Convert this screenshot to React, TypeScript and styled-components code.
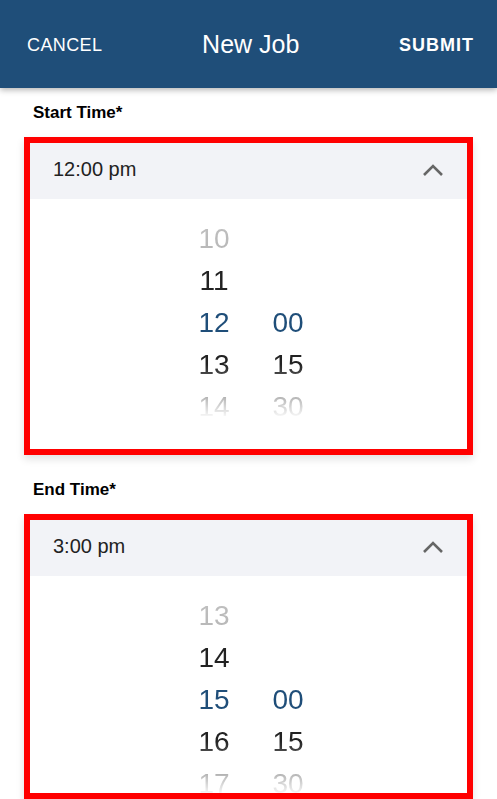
import styled, { createGlobalStyle } from "styled-components";

const GlobalStyle = createGlobalStyle`
  html, body {
    margin: 0;
    padding: 0;
    background: #ffffff;
    font-family: "Liberation Sans", Arial, sans-serif;
  }
`;

const BRAND = "#1f4e79";

const Page = styled.div`
  display: flex;
  flex-direction: column;
  height: 100vh;
  overflow: hidden;
`;

const TopBar = styled.header`
  flex-shrink: 0;
  display: flex;
  align-items: center;
  justify-content: space-between;
  height: 88px;
  padding: 0 23px 0 27px;
  background: ${BRAND};
  color: #ffffff;
  box-shadow: 0 2px 6px rgba(0, 0, 0, 0.3);
  position: relative;
  z-index: 1;
`;

const BarButton = styled.span<{ strong?: boolean }>`
  font-size: 18px;
  font-weight: ${({ strong }) => (strong ? 700 : 400)};
  letter-spacing: ${({ strong }) => (strong ? "1px" : "0.4px")};
  text-transform: uppercase;
  padding-top: 2px;
`;

const Title = styled.h1`
  margin: 0;
  font-size: 25px;
  font-weight: 400;
`;

const Section = styled.section<{ grow?: boolean }>`
  display: flex;
  flex-direction: column;
  padding: 0 24px;
  margin-top: ${({ grow }) => (grow ? "25px" : "15px")};
  flex: ${({ grow }) => (grow ? "1 1 auto" : "0 0 auto")};
  min-height: 0;
`;

const Label = styled.label`
  display: block;
  padding-left: 9px;
  margin-bottom: 14px;
  font-size: 17px;
  line-height: 20px;
  font-weight: 700;
  color: #000000;
`;

const PickerBox = styled.div<{ grow?: boolean }>`
  border: 6px solid #ff0000;
  background: #ffffff;
  box-shadow: 0 4px 8px rgba(0, 0, 0, 0.12);
  overflow: hidden;
  flex: ${({ grow }) => (grow ? "1 1 auto" : "0 0 auto")};
  min-height: 0;
`;

const PickerHead = styled.div`
  display: flex;
  align-items: center;
  justify-content: space-between;
  height: 56px;
  box-sizing: border-box;
  padding: 0 23px 3px 23px;
  background: #f2f3f7;
  font-size: 20px;
  color: #222222;
`;

const Wheel = styled.div`
  display: flex;
  justify-content: center;
  gap: 42px;
  height: 250px;
  padding: 19px 0 0 5px;
  box-sizing: border-box;
  -webkit-mask-image: linear-gradient(
    to bottom,
    rgba(0, 0, 0, 0.25) 0%,
    rgba(0, 0, 0, 0.32) 20%,
    #000 28%,
    #000 66%,
    rgba(0, 0, 0, 0.75) 72%,
    rgba(0, 0, 0, 0.3) 80%,
    transparent 88%
  );
  mask-image: linear-gradient(
    to bottom,
    rgba(0, 0, 0, 0.25) 0%,
    rgba(0, 0, 0, 0.32) 20%,
    #000 28%,
    #000 66%,
    rgba(0, 0, 0, 0.75) 72%,
    rgba(0, 0, 0, 0.3) 80%,
    transparent 88%
  );
`;

const Column = styled.div`
  display: flex;
  flex-direction: column;
  width: 32px;
`;

const Cell = styled.div<{ active?: boolean }>`
  height: 42px;
  line-height: 42px;
  font-size: 28px;
  text-align: center;
  color: ${({ active }) => (active ? BRAND : "#222222")};
`;

function Chevron() {
  return (
    <svg width="22" height="14" viewBox="0 0 22 14" aria-hidden="true">
      <polyline
        points="2,12 11,3 20,12"
        fill="none"
        stroke="#666666"
        strokeWidth="2.6"
      />
    </svg>
  );
}

type PickerProps = {
  label: string;
  value: string;
  hour: number;
  grow?: boolean;
};

function TimePicker({ label, value, hour, grow }: PickerProps) {
  const hours = [hour - 2, hour - 1, hour, hour + 1, hour + 2];
  const minutes = ["", "", "00", "15", "30"];
  return (
    <Section grow={grow}>
      <Label>{label}</Label>
      <PickerBox grow={grow}>
        <PickerHead>
          <span>{value}</span>
          <Chevron />
        </PickerHead>
        <Wheel>
          <Column>
            {hours.map((h) => (
              <Cell key={h} active={h === hour}>
                {h}
              </Cell>
            ))}
          </Column>
          <Column>
            {minutes.map((m, i) => (
              <Cell key={i} active={m === "00"}>
                {m}
              </Cell>
            ))}
          </Column>
        </Wheel>
      </PickerBox>
    </Section>
  );
}

export default function App() {
  return (
    <Page>
      <GlobalStyle />
      <TopBar>
        <BarButton>Cancel</BarButton>
        <Title>New Job</Title>
        <BarButton strong>Submit</BarButton>
      </TopBar>
      <TimePicker label="Start Time*" value="12:00 pm" hour={12} />
      <TimePicker label="End Time*" value="3:00 pm" hour={15} grow />
    </Page>
  );
}
